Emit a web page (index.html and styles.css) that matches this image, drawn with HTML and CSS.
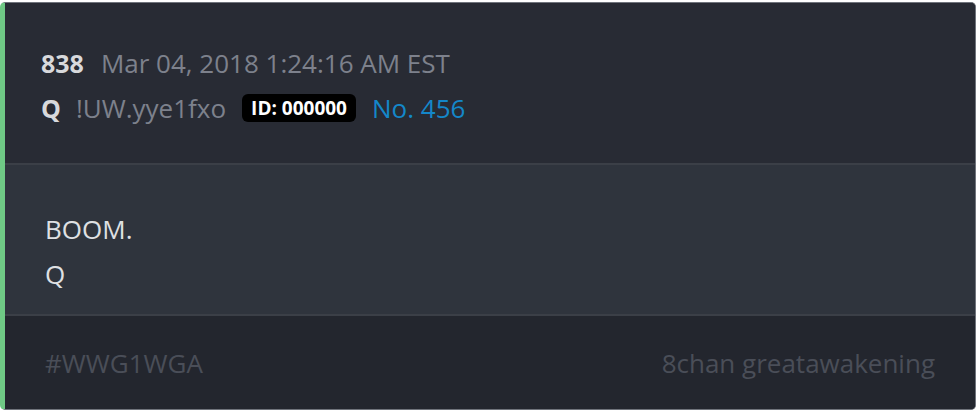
FILE: index.html
```html
<!DOCTYPE html>
<html lang="en">
<head>
    <meta charset="UTF-8">
    <meta name="viewport" content="width=device-width, initial-scale=1.0">
    <title>Post 838</title>
    <link rel="stylesheet" href="styles.css">
</head>
<body>
    <!-- Post card -->
    <div class="post">
        <div class="post-header">
            <div class="meta-row">
                <span class="post-count">838</span>
                <span class="post-date">Mar 04, 2018 1:24:16 AM EST</span>
            </div>
            <div class="meta-row">
                <span class="author">Q</span>
                <span class="trip">!UW.yye1fxo</span>
                <span class="id-badge">ID: 000000</span>
                <a class="post-no" href="#">No. 456</a>
            </div>
        </div>

        <div class="post-body">
            <p>BOOM.</p>
            <p>Q</p>
        </div>

        <div class="post-footer">
            <span>#WWG1WGA</span>
            <span>8chan greatawakening</span>
        </div>
    </div>
</body>
</html>
```

FILE: styles.css
```css
body {
    font-family: 'Open Sans', sans-serif;
    margin: 0;
    padding: 2px 2px 2px 0;
    background-color: #ffffff;
}

.post {
    border: 1px solid #70747c;
    border-left: 5px solid #6fc985;
    border-radius: 5px;
    overflow: hidden;
    background-color: #2a2d35;
}

.post-header {
    padding: 37px 36px 33px;
    background-color: #282b34;
    border-bottom: 2px solid #3b3f47;
}

.meta-row {
    display: flex;
    align-items: center;
    height: 45px;
    font-size: 26px;
}

.post-count,
.author {
    color: #d8d9dc;
    font-weight: bold;
    font-size: 25px;
    margin-right: 17px;
}

.author {
    margin-right: 15px;
}

.post-date,
.trip {
    color: #7d818c;
}

.trip {
    margin-right: 16px;
}

.id-badge {
    background-color: #000;
    color: #fff;
    font-size: 19px;
    font-weight: bold;
    line-height: 28px;
    padding: 0 9px;
    border-radius: 6px;
    margin-right: 16px;
}

.post-no {
    color: #1487c9;
    text-decoration: none;
}

.post-body {
    padding: 42px 40px 17px;
    background-color: #2f343d;
    border-bottom: 2px solid #3b3f47;
    color: #dfe0e3;
    font-size: 26px;
}

.post-body p {
    margin: 0;
    line-height: 45px;
}

.post-footer {
    display: flex;
    justify-content: space-between;
    padding: 25px 40px 23px;
    line-height: 45px;
    background-color: #23262e;
    color: #4a4e58;
    font-size: 26px;
}
```
